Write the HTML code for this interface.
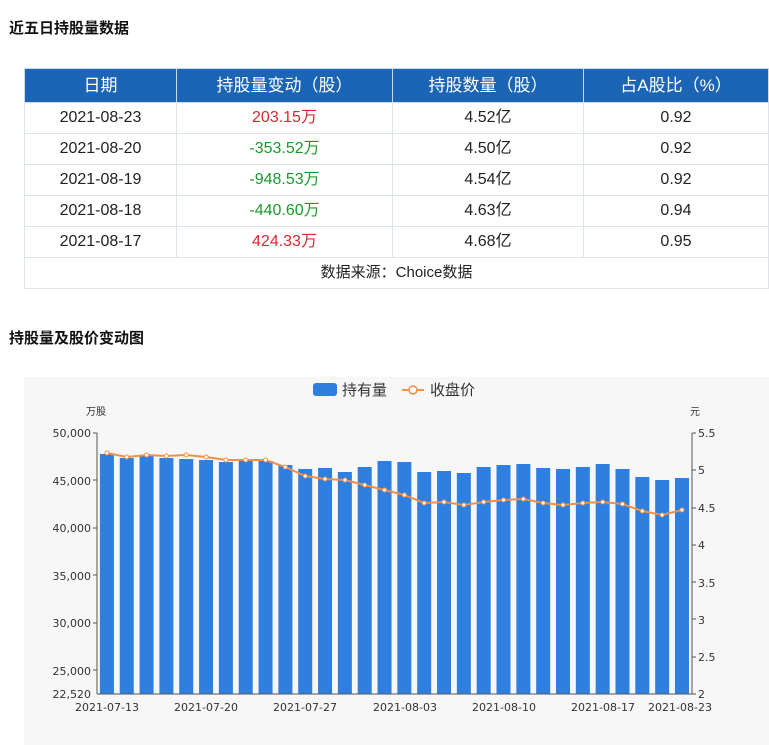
<!DOCTYPE html>
<html><head><meta charset="utf-8"><style>
body{margin:0;background:#fff;font-family:"Liberation Sans","Noto Sans CJK SC",sans-serif;width:769px;height:745px;overflow:hidden;position:relative}
h3{position:absolute;left:9px;margin:0;font-size:15px;font-weight:bold;color:#111}
table{position:absolute;left:24px;top:68px;width:745px;border-collapse:collapse;font-size:16px}
th{background:#1c65b4;color:#fff;font-weight:normal;height:33px;padding:0;line-height:33px;border:1px solid #cfd8e4;font-size:17px}
td{height:30px;padding:0;line-height:30px;border:1px solid #dde3ea;text-align:center;vertical-align:middle;color:#222;overflow:hidden}
td span,th span{display:inline-block;vertical-align:middle;line-height:20px}
.r{color:#d8292e}.g{color:#1a9a2e}
</style></head><body>
<h3 style="top:17px">近五日持股量数据</h3>
<table>
<tr><th style="width:151px">日期</th><th style="width:215px">持股量变动（股）</th><th style="width:190px">持股数量（股）</th><th>占A股比（%）</th></tr>
<tr><td>2021-08-23</td><td class="r">203.15万</td><td>4.52亿</td><td>0.92</td></tr>
<tr><td>2021-08-20</td><td class="g">-353.52万</td><td>4.50亿</td><td>0.92</td></tr>
<tr><td>2021-08-19</td><td class="g">-948.53万</td><td>4.54亿</td><td>0.92</td></tr>
<tr><td>2021-08-18</td><td class="g">-440.60万</td><td>4.63亿</td><td>0.94</td></tr>
<tr><td>2021-08-17</td><td class="r">424.33万</td><td>4.68亿</td><td>0.95</td></tr>
<tr><td colspan="4" style="font-size:15px">数据来源：Choice数据</td></tr>
</table>
<h3 style="top:327px">持股量及股价变动图</h3>
<svg style="position:absolute;left:0;top:0" width="769" height="745" font-family="DejaVu Sans,Noto Sans CJK SC,sans-serif">
<rect x="24" y="377" width="745" height="368" fill="#f7f7f7"/>
<rect x="313" y="383" width="24" height="13" rx="3" fill="#2f7fe0"/>
<text x="342" y="395" font-size="15" fill="#333">持有量</text>
<line x1="402" y1="390" x2="424" y2="390" stroke="#ee8f4a" stroke-width="2"/><circle cx="413" cy="390" r="4" fill="#fff" stroke="#ee8f4a" stroke-width="1.5"/>
<text x="430" y="395" font-size="15" fill="#333">收盘价</text>
<text x="86" y="415" font-size="10" fill="#333">万股</text>
<text x="690" y="415" font-size="10" fill="#333">元</text>
<g id="bars" fill="#2f7fe0"></g>
<g font-size="11" fill="#333" text-anchor="end">
<text x="91" y="437">50,000</text><text x="91" y="485">45,000</text><text x="91" y="532">40,000</text><text x="91" y="580">35,000</text><text x="91" y="627">30,000</text><text x="91" y="675">25,000</text><text x="91" y="698">22,520</text>
</g>
<g font-size="11" fill="#333">
<text x="698" y="437">5.5</text><text x="698" y="474">5</text><text x="698" y="512">4.5</text><text x="698" y="549">4</text><text x="698" y="587">3.5</text><text x="698" y="624">3</text><text x="698" y="661">2.5</text><text x="698" y="698">2</text>
</g>
<g stroke="#555" stroke-width="1">
<line x1="97" y1="433" x2="97" y2="694"/><line x1="692" y1="433" x2="692" y2="694"/><line x1="97" y1="694" x2="692" y2="694"/>
<path d="M93 433h4M93 480h4M93 528h4M93 575h4M93 623h4M93 670h4M692 433h4M692 470h4M692 508h4M692 545h4M692 582h4M692 619h4M692 657h4M692 694h4"/>
</g>
<g font-size="11" fill="#333" text-anchor="middle">
<text x="107" y="711">2021-07-13</text><text x="206" y="711">2021-07-20</text><text x="305" y="711">2021-07-27</text><text x="405" y="711">2021-08-03</text><text x="504" y="711">2021-08-10</text><text x="603" y="711">2021-08-17</text><text x="680" y="711">2021-08-23</text>
</g>
<polyline id="pl" fill="none" stroke="#ee8f4a" stroke-width="2"/>
<g id="dots"></g>
</svg>
<script>
var b=[454,458,456,458,459,460,462,461,461,465,469,468,472,467,461,462,472,471,473,467,465,464,468,469,467,464,469,477,480,478];
var p=[453,457,455,456,455,457,460,460,460,467,476,479,480,485,490,495,503,502,505,502,500,499,503,505,503,502,504,511,515,510];
var s="",pts="",d="";
for(var i=0;i<30;i++){var cx=97+19.83*(i+0.5);s+='<rect x="'+(cx-7)+'" y="'+b[i]+'" width="14" height="'+(694-b[i])+'"/>';pts+=cx+','+p[i]+' ';d+='<circle cx="'+cx+'" cy="'+p[i]+'" r="2" fill="#fff" stroke="#ee8f4a"/>';}
document.getElementById('bars').innerHTML=s;document.getElementById('pl').setAttribute('points',pts);document.getElementById('dots').innerHTML=d;
</script>
</body></html>
